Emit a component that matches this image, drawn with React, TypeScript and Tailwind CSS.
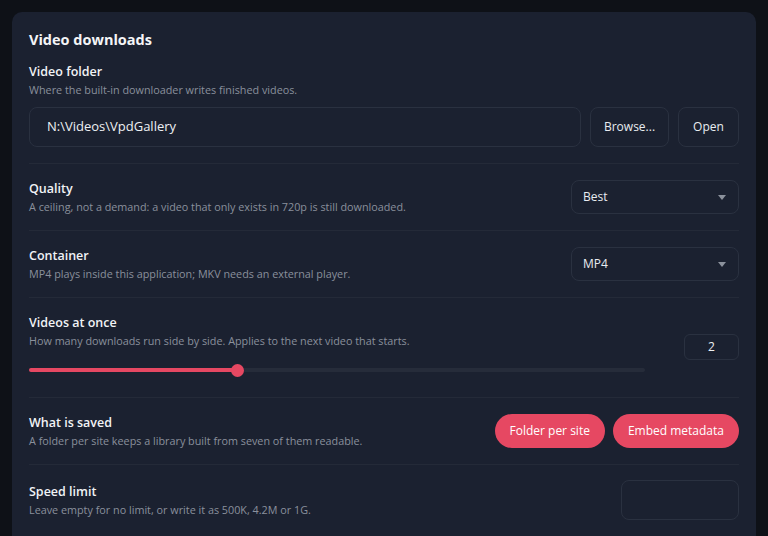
const font = { fontFamily: '"Open Sans", "Noto Sans", sans-serif' };

const Label = ({ title, desc }: { title: string; desc: string }) => (
  <div className="flex flex-col">
    <span className="text-[12.5px] font-semibold leading-[17px] text-[#f1f3f6]">{title}</span>
    <span className="mt-[2px] text-[10.8px] leading-[15px] text-[#8a909c]">{desc}</span>
  </div>
);

const Select = ({ value }: { value: string }) => (
  <div className="flex h-[34px] w-[168px] items-center justify-between rounded-[8px] border border-[#2a3140] pl-[11px] pr-[12px] text-[12px] text-[#e9ecf1]">
    <span>{value}</span>
    <svg width="8" height="5" viewBox="0 0 8 5">
      <path d="M0 0h8L4 5z" fill="#8b919c" />
    </svg>
  </div>
);

export default function App() {
  return (
    <div className="min-h-[536px] bg-[#0e1117] px-[12px] pt-[12px]" style={font}>
      <div className="h-[524px] overflow-hidden rounded-t-[10px] bg-[#1b2130] px-[17px] pt-[18px]">
        <h2 className="text-[14.5px] font-bold leading-[20px] text-[#f4f5f7]">Video downloads</h2>

        <div className="mt-[13px] pb-[16px]">
          <Label title="Video folder" desc="Where the built-in downloader writes finished videos." />
          <div className="mt-[10px] flex gap-[9px]">
            <div className="flex h-[40px] flex-1 items-center rounded-[8px] border border-[#2a3140] pl-[17px] text-[13px] text-[#eef0f3]">
              N:\Videos\VpdGallery
            </div>
            <button className="h-[40px] w-[79px] rounded-[8px] border border-[#2a3140] text-[12px] text-[#e9ecf1]">
              Browse...
            </button>
            <button className="h-[40px] w-[61px] rounded-[8px] border border-[#2a3140] text-[12px] text-[#e9ecf1]">
              Open
            </button>
          </div>
        </div>

        <div className="flex items-center justify-between border-t border-[#242a38] py-[16px]">
          <Label title="Quality" desc="A ceiling, not a demand: a video that only exists in 720p is still downloaded." />
          <Select value="Best" />
        </div>

        <div className="flex items-center justify-between border-t border-[#242a38] py-[16px]">
          <Label title="Container" desc="MP4 plays inside this application; MKV needs an external player." />
          <Select value="MP4" />
        </div>

        <div className="flex items-center justify-between border-t border-[#242a38] pb-[20px] pt-[16px]">
          <div className="flex flex-col">
            <Label title="Videos at once" desc="How many downloads run side by side. Applies to the next video that starts." />
            <div className="relative mt-[15px] h-[14px] w-[616px]">
              <div className="absolute left-0 right-0 top-[5px] h-[4px] rounded-full bg-[#262c3a]" />
              <div className="absolute left-0 top-[5px] h-[4px] w-[208px] rounded-full bg-[#e64862]" />
              <div className="absolute left-[202px] top-[0.5px] h-[13px] w-[13px] rounded-full bg-[#e64862]" />
            </div>
          </div>
          <div className="mt-[3px] flex h-[26px] w-[55px] items-center justify-center rounded-[6px] border border-[#2a3140] text-[12px] text-[#eef0f3]">
            2
          </div>
        </div>

        <div className="flex items-center justify-between border-t border-[#242a38] py-[16px]">
          <Label title="What is saved" desc="A folder per site keeps a library built from seven of them readable." />
          <div className="flex gap-[8px]">
            <button className="h-[34px] rounded-full bg-[#e64862] px-[15px] text-[12px] text-white">
              Folder per site
            </button>
            <button className="h-[34px] rounded-full bg-[#e64862] px-[15px] text-[12px] text-white">
              Embed metadata
            </button>
          </div>
        </div>

        <div className="flex items-center justify-between border-t border-[#242a38] py-[15px]">
          <Label title="Speed limit" desc="Leave empty for no limit, or write it as 500K, 4.2M or 1G." />
          <div className="h-[40px] w-[118px] rounded-[8px] border border-[#2a3140]" />
        </div>
      </div>
    </div>
  );
}
